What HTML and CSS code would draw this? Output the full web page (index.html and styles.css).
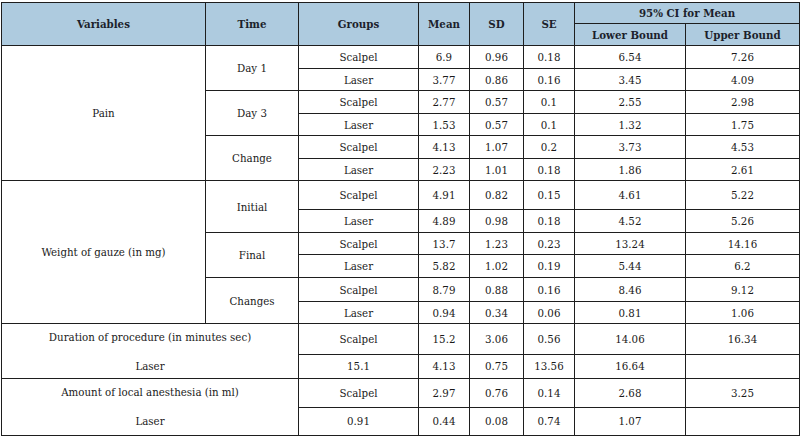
FILE: index.html
```html
<!DOCTYPE html>
<html lang="en">
<head>
<meta charset="utf-8">
<title>Table</title>
<link rel="stylesheet" href="styles.css">
</head>
<body>
<table class="data">
  <colgroup>
    <col class="c-var"><col class="c-time"><col class="c-grp"><col class="c-mean"><col class="c-sd"><col class="c-se"><col class="c-lo"><col class="c-up">
  </colgroup>
  <thead>
    <tr class="h1">
      <th rowspan="2">Variables</th>
      <th rowspan="2">Time</th>
      <th rowspan="2">Groups</th>
      <th rowspan="2">Mean</th>
      <th rowspan="2">SD</th>
      <th rowspan="2">SE</th>
      <th colspan="2">95% CI for Mean</th>
    </tr>
    <tr class="h2">
      <th>Lower Bound</th>
      <th>Upper Bound</th>
    </tr>
  </thead>
  <tbody>
    <tr class="r23"><td rowspan="6">Pain</td><td rowspan="2">Day 1</td><td>Scalpel</td><td>6.9</td><td>0.96</td><td>0.18</td><td>6.54</td><td>7.26</td></tr>
    <tr class="r22"><td>Laser</td><td>3.77</td><td>0.86</td><td>0.16</td><td>3.45</td><td>4.09</td></tr>
    <tr class="r23"><td rowspan="2">Day 3</td><td>Scalpel</td><td>2.77</td><td>0.57</td><td>0.1</td><td>2.55</td><td>2.98</td></tr>
    <tr class="r22"><td>Laser</td><td>1.53</td><td>0.57</td><td>0.1</td><td>1.32</td><td>1.75</td></tr>
    <tr class="r23"><td rowspan="2">Change</td><td>Scalpel</td><td>4.13</td><td>1.07</td><td>0.2</td><td>3.73</td><td>4.53</td></tr>
    <tr class="r22"><td>Laser</td><td>2.23</td><td>1.01</td><td>0.18</td><td>1.86</td><td>2.61</td></tr>
    <tr class="r29"><td rowspan="6">Weight of gauze (in mg)</td><td rowspan="2">Initial</td><td>Scalpel</td><td>4.91</td><td>0.82</td><td>0.15</td><td>4.61</td><td>5.22</td></tr>
    <tr class="r23"><td>Laser</td><td>4.89</td><td>0.98</td><td>0.18</td><td>4.52</td><td>5.26</td></tr>
    <tr class="r22"><td rowspan="2">Final</td><td>Scalpel</td><td>13.7</td><td>1.23</td><td>0.23</td><td>13.24</td><td>14.16</td></tr>
    <tr class="r23"><td>Laser</td><td>5.82</td><td>1.02</td><td>0.19</td><td>5.44</td><td>6.2</td></tr>
    <tr class="r24"><td rowspan="2">Changes</td><td>Scalpel</td><td>8.79</td><td>0.88</td><td>0.16</td><td>8.46</td><td>9.12</td></tr>
    <tr class="r22"><td>Laser</td><td>0.94</td><td>0.34</td><td>0.06</td><td>0.81</td><td>1.06</td></tr>
    <tr class="r30"><td colspan="2" rowspan="2" class="split"><div class="s-top">Duration of procedure (in minutes sec)</div><div class="s-bot">Laser</div></td><td>Scalpel</td><td>15.2</td><td>3.06</td><td>0.56</td><td>14.06</td><td>16.34</td></tr>
    <tr class="r24"><td>15.1</td><td>4.13</td><td>0.75</td><td>13.56</td><td>16.64</td><td></td></tr>
    <tr class="r28"><td colspan="2" rowspan="2" class="split"><div class="s-top2">Amount of local anesthesia (in ml)</div><div class="s-bot2">Laser</div></td><td>Scalpel</td><td>2.97</td><td>0.76</td><td>0.14</td><td>2.68</td><td>3.25</td></tr>
    <tr class="r28"><td>0.91</td><td>0.44</td><td>0.08</td><td>0.74</td><td>1.07</td><td></td></tr>
  </tbody>
</table>
</body>
</html>
```
FILE: styles.css
```css
html, body {
  margin: 0;
  padding: 0;
  background: #ffffff;
}

.data {
  margin: 2px 0 0 1px;
  width: 798px;
  border-collapse: collapse;
  table-layout: fixed;
  font-family: "DejaVu Serif Condensed", "DejaVu Serif", serif;
  font-stretch: condensed;
  font-size: 11.4px;
  color: #1a1a1a;
}

.c-var { width: 204px; }
.c-time { width: 93px; }
.c-grp { width: 120px; }
.c-mean { width: 51px; }
.c-sd { width: 54px; }
.c-se { width: 51px; }
.c-lo { width: 111px; }
.c-up { width: 114px; }

.data th,
.data td {
  border: 1px solid #1e1e1e;
  padding: 0;
  text-align: center;
  vertical-align: middle;
  line-height: 14px;
}

.data th {
  background: #aecbdf;
  font-weight: bold;
  color: #1c1f2c;
}

.h1 th { height: 20px; }
.h2 th { height: 21px; }

.r22 td { height: 21px; }
.r23 td { height: 22px; }
.r24 td { height: 23px; }
.r28 td { height: 27px; }
.r29 td { height: 28px; }
.r30 td { height: 29px; }

.data td.split {
  vertical-align: top;
  height: auto;
}

.s-top { height: 30px; line-height: 26px; }
.s-bot { height: 24px; line-height: 24px; }
.s-top2 { height: 28px; line-height: 26px; }
.s-bot2 { height: 28px; line-height: 28px; }
```
